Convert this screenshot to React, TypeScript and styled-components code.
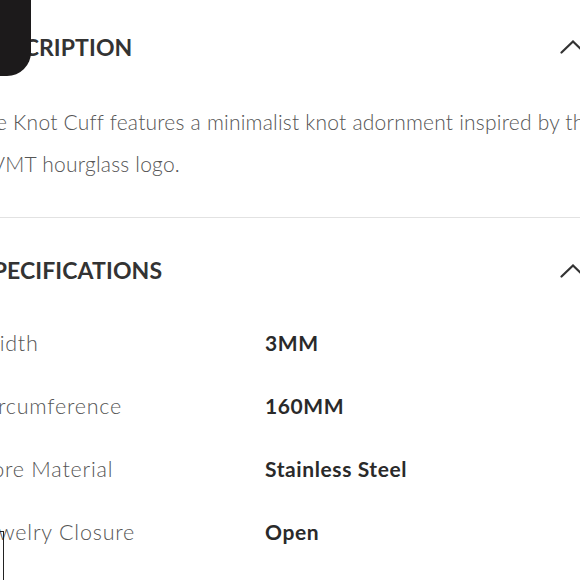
import React from "react";
import styled, { createGlobalStyle } from "styled-components";

const GlobalStyle = createGlobalStyle`
  html, body {
    margin: 0;
    padding: 0;
    background: #ffffff;
    overflow: hidden;
  }
  body {
    font-family: Lato, "Open Sans", "Liberation Sans", sans-serif;
    -webkit-font-smoothing: antialiased;
  }
`;

const Viewport = styled.div`
  position: relative;
  width: 580px;
  height: 580px;
  overflow: hidden;
`;

const Page = styled.div`
  width: 606px;
  margin-left: -20px;
  display: flex;
  flex-direction: column;
`;

const Section = styled.section<{ $divider?: boolean }>`
  display: flex;
  flex-direction: column;
  border-top: ${(p) => (p.$divider ? "1px solid #e2e2e2" : "none")};
`;

const Header = styled.div<{ $height?: number; $pad?: number }>`
  box-sizing: border-box;
  height: ${(p) => p.$height ?? 94}px;
  padding-top: ${(p) => p.$pad ?? 0}px;
  display: flex;
  align-items: center;
  justify-content: space-between;
`;

const Title = styled.h2`
  margin: 0;
  font-size: 23px;
  font-weight: 700;
  letter-spacing: 0.1px;
  color: #333333;
  line-height: 1;
`;

const Chevron = styled.svg`
  width: 26px;
  height: 14px;
  flex: none;
`;

const Body = styled.p`
  margin: 7px 0 32px -8px;
  font-size: 21px;
  line-height: 42px;
  font-weight: 300;
  letter-spacing: 0.22px;
  color: #555555;
  white-space: nowrap;
`;

const Specs = styled.div`
  display: flex;
  flex-direction: column;
  margin-top: -4px;
`;

const Row = styled.div`
  display: grid;
  grid-template-columns: 288px 1fr;
  align-items: center;
  height: 63px;
  margin-left: -3px;
`;

const Label = styled.span`
  font-size: 21.5px;
  font-weight: 300;
  letter-spacing: 0.8px;
  color: #555555;
`;

const Value = styled.span`
  font-size: 21px;
  font-weight: 700;
  letter-spacing: 0.6px;
  color: #2a2a2a;
`;

const Blob = styled.div`
  position: absolute;
  left: 0;
  top: 0;
  width: 31px;
  height: 76px;
  background: #1c1a1b;
  border-bottom-right-radius: 24px;
`;

const Caret = styled.div`
  position: absolute;
  left: 0;
  top: 531px;
  width: 3px;
  height: 60px;
  border-top: 1.5px solid #222;
  border-right: 1.5px solid #222;
`;

const ChevronUp = () => (
  <Chevron viewBox="0 0 26 14">
    <polyline
      points="1.5,12.5 13,1.5 24.5,12.5"
      fill="none"
      stroke="#333"
      strokeWidth="2.2"
      strokeLinecap="round"
      strokeLinejoin="miter"
    />
  </Chevron>
);

const specs = [
  ["Width", "3MM"],
  ["Circumference", "160MM"],
  ["Core Material", "Stainless Steel"],
  ["Jewelry Closure", "Open"],
];

export default function App() {
  return (
    <Viewport>
      <GlobalStyle />
      <Page>
        <Section>
          <Header>
            <Title>DESCRIPTION</Title>
            <ChevronUp />
          </Header>
          <Body>
            The Knot Cuff features a minimalist knot adornment inspired by the
            <br />
            MVMT hourglass logo.
          </Body>
        </Section>
        <Section $divider>
          <Header $height={97} $pad={8}>
            <Title>SPECIFICATIONS</Title>
            <ChevronUp />
          </Header>
          <Specs>
            {specs.map(([k, v]) => (
              <Row key={k}>
                <Label>{k}</Label>
                <Value>{v}</Value>
              </Row>
            ))}
          </Specs>
        </Section>
      </Page>
      <Blob />
      <Caret />
    </Viewport>
  );
}
